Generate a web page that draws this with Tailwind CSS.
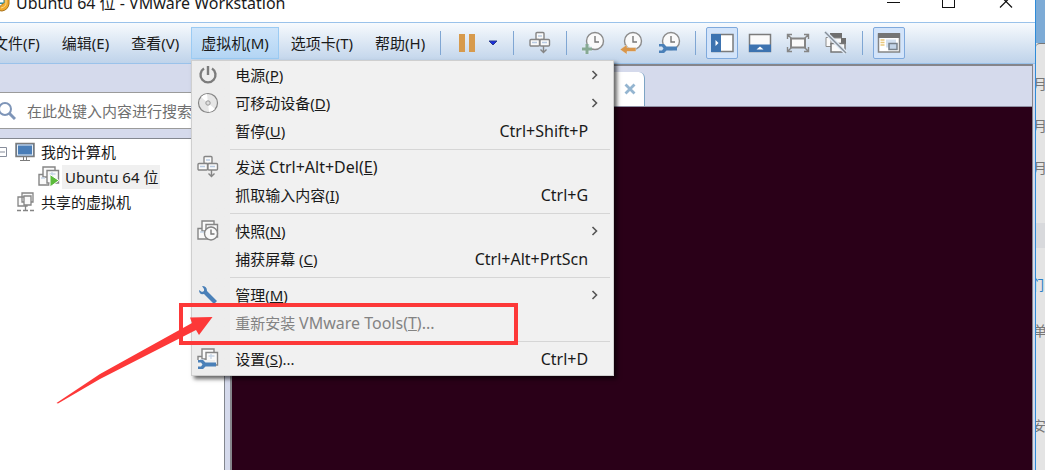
<!DOCTYPE html>
<html lang="zh-CN">

<head>
	<meta charset="UTF-8" />
	<meta name="viewport" content="width=device-width, initial-scale=1.0" />
	<title>Ubuntu 64 位 - VMware Workstation</title>
	<script src="https://cdn.jsdelivr.net/npm/@tailwindcss/browser@4"></script>
</head>

<body class="flex h-screen overflow-hidden bg-white text-[15px] leading-6 text-[#1a1a1a] font-['Noto_Sans','Noto_Sans_CJK_SC',sans-serif]">
	<!-- shared symbols -->
	<svg class="hidden">
		<symbol id="clock" viewBox="0 0 24 24">
			<circle cx="14" cy="10" r="8.500" fill="#fafafa" stroke="#8b8b8b" stroke-width="1.400" />
			<path d="M14 5v6h4" fill="none" stroke="#777" stroke-width="1.400" />
		</symbol>
		<symbol id="keys" viewBox="0 0 24 24">
			<g fill="#fafafa" stroke="#858585" stroke-width="1.400">
				<rect x="8" y="1.500" width="8" height="7" rx="1" />
				<rect x="2" y="8.500" width="9.500" height="6.500" rx="1" />
				<rect x="12" y="8.500" width="9.500" height="6.500" rx="1" />
				<path d="M15.500 15v6M12.500 18.500l3 3 3-3" fill="none" />
			</g>
			<path d="M10 5h4M4 11.500h5M14 11.500h5" stroke="#b9cbe2" stroke-width="1.500" />
		</symbol>
		<symbol id="wrench-flat" viewBox="0 0 24 24">
			<path d="M2 13h5l2.500 2.500H20v4H9.500L7 22H2v-2.500h3l1.500-2L5 15.500H2z" fill="#4a80b8" />
		</symbol>
		<symbol id="machines" viewBox="0 0 24 24">
			<g fill="#fafafa" stroke="#858585" stroke-width="1.400">
				<path d="M2 20V9.500h10V20z" />
				<path d="M6 12V2h12v10z" />
				<path d="M10 18V5.500h11.500V18z" />
			</g>
			<path d="M4 13h4M12.500 9h6M15 7v5" stroke="#c6d5e6" stroke-width="1.300" />
		</symbol>
		<symbol id="chevron" viewBox="0 0 8 12">
			<path d="M1.500 2l4 4-4 4" fill="none" stroke="#555" stroke-width="1.600" />
		</symbol>
	</svg>

	<div class="relative flex min-w-0 flex-1 flex-col border-r border-[#2f8bd8] bg-[#d5daec]">
		<header class="flex h-[22px] shrink-0 items-start bg-white">
			<svg class="-ml-2 -mt-2 mr-1 h-5 w-5 shrink-0" viewBox="0 0 20 20">
				<path d="M2 2h13v10H2z" fill="#2f9fba" />
				<path d="M5 15q5 0 6-5V2h6v10q-1 6-7 7-5 0-7-3z" fill="#f0a92d" stroke="#a9731c" />
				<path d="M7 3h5v8H7z" fill="#fff" stroke="#247f96" />
				<path d="M14 2v9q0 4-5 5" fill="none" stroke="#f9d98e" />
			</svg>
			<h1 class="-mt-[9px] whitespace-nowrap text-base">Ubuntu 64 位 - VMware Workstation</h1>
			<div class="-mt-2 ml-auto flex h-6 items-center">
				<button aria-label="最小化" class="flex w-14 justify-center">
					<svg class="h-5 w-5" viewBox="0 0 20 20"><path d="M2 8.500h13" stroke="#111" /></svg>
				</button>
				<button aria-label="最大化" class="flex w-14 justify-center">
					<svg class="h-5 w-5" viewBox="0 0 20 20"><rect x="1.500" y="2.500" width="12" height="11" fill="none" stroke="#111" /></svg>
				</button>
				<button aria-label="关闭" class="flex w-14 justify-center">
					<svg class="h-5 w-5" viewBox="0 0 20 20"><path d="M3 1.500l12 12M15 1.500l-12 12" stroke="#111" stroke-width="1.200" /></svg>
				</button>
			</div>
		</header>

		<div class="flex h-[42px] shrink-0 items-center border-t border-b border-[#9ac2ea] bg-linear-to-b from-[#f7fafd] to-[#bfd3ea]">
			<nav class="-ml-[17px] flex gap-[2px] whitespace-nowrap">
				<button class="h-8 px-[10px]">文件(F)</button>
				<button class="h-8 px-[10px]">编辑(E)</button>
				<button class="h-8 px-[10px]">查看(V)</button>
				<div class="relative">
					<button aria-expanded="true" class="h-8 border border-[#9bcbf3] bg-linear-to-b from-[#cfe5fa] to-[#b3d5f4] px-[9px]">虚拟机(M)</button>
					<ul class="absolute top-full left-0 z-10 mt-px w-[423px] border border-[#cfcfcf] bg-[#f1f1f1] bg-linear-to-r from-[#ededed] from-[38px] to-[#f1f1f1] to-[38px] pb-[2px] shadow-[3px_3px_4px_rgba(0,0,0,0.6)]">
						<li><button class="flex h-7 w-full items-center pr-[14px]">
							<span class="flex w-[43px] shrink-0 pl-1">
								<svg class="h-6 w-6" viewBox="0 0 24 24"><path d="M8 5.500a7.500 7.500 0 1 0 8 0M12 3v9" fill="none" stroke="#7c7c7c" stroke-width="2.400" /></svg>
							</span>
							<span>电源(<u>P</u>)</span>
							<svg class="ml-auto h-3 w-2"><use href="#chevron" /></svg>
						</button></li>
						<li><button class="flex h-7 w-full items-center pr-[14px]">
							<span class="flex w-[43px] shrink-0 pl-1">
								<svg class="h-6 w-6" viewBox="0 0 24 24">
									<circle cx="12" cy="12" r="9.500" fill="#e6e6e6" stroke="#858585" stroke-width="1.200" />
									<path d="M12 12L5 6a9 9 0 0 1 6-3zM12 12l7 6a9 9 0 0 1-6 3z" fill="#fff" />
									<circle cx="12" cy="12" r="2.200" fill="#ddd" stroke="#999" />
								</svg>
							</span>
							<span>可移动设备(<u>D</u>)</span>
							<svg class="ml-auto h-3 w-2"><use href="#chevron" /></svg>
						</button></li>
						<li><button class="flex h-7 w-full items-center pr-[25px] pl-[43px]">
							<span>暂停(<u>U</u>)</span>
							<span class="ml-auto text-base">Ctrl+Shift+P</span>
						</button></li>
						<li class="mt-1 mb-[3px] ml-[38px] mr-[3px] h-px bg-[#d6d6d6]"></li>
						<li><button class="flex h-7 w-full items-center pr-[14px]">
							<span class="flex w-[43px] shrink-0 pl-1"><svg class="h-6 w-6"><use href="#keys" /></svg></span>
							<span>发送 <span class="text-base">Ctrl+Alt+Del(<u>E</u>)</span></span>
						</button></li>
						<li><button class="flex h-7 w-full items-center pr-[25px] pl-[43px]">
							<span>抓取输入内容(<u>I</u>)</span>
							<span class="ml-auto text-base">Ctrl+G</span>
						</button></li>
						<li class="mt-1 mb-[3px] ml-[38px] mr-[3px] h-px bg-[#d6d6d6]"></li>
						<li><button class="flex h-7 w-full items-center pr-[14px]">
							<span class="flex w-[43px] shrink-0 pl-1">
								<svg class="h-6 w-6" viewBox="0 0 24 24">
									<use href="#machines" width="24" height="24" />
									<circle cx="15" cy="14.500" r="6.500" fill="#fafafa" stroke="#858585" stroke-width="1.400" />
									<path d="M15 10.500v4.500h3.500" fill="none" stroke="#777" stroke-width="1.400" />
								</svg>
							</span>
							<span>快照(<u>N</u>)</span>
							<svg class="ml-auto h-3 w-2"><use href="#chevron" /></svg>
						</button></li>
						<li><button class="flex h-7 w-full items-center pr-[25px] pl-[43px]">
							<span>捕获屏幕 (<u>C</u>)</span>
							<span class="ml-auto text-base">Ctrl+Alt+PrtScn</span>
						</button></li>
						<li class="mt-1 mb-[3px] ml-[38px] mr-[3px] h-px bg-[#d6d6d6]"></li>
						<li><button class="flex h-7 w-full items-center pr-[14px]">
							<span class="flex w-[43px] shrink-0 pl-1">
								<svg class="h-6 w-6" viewBox="0 0 24 24">
									<path d="M6 3q5 0 5 5l10 10-3 3L8 11q-5 1-5-4l3 2 2-1V6z" fill="#4a80b8" />
								</svg>
							</span>
							<span>管理(<u>M</u>)</span>
							<svg class="ml-auto h-3 w-2"><use href="#chevron" /></svg>
						</button></li>
						<li><button disabled class="flex h-7 w-full items-center pr-[25px] pl-[43px] text-[#838383]">
							<span>重新安装 <span class="text-base">VMware Tools(<u>T</u>)...</span></span>
						</button></li>
						<li class="mt-1 mb-[3px] ml-[38px] mr-[3px] h-px bg-[#d6d6d6]"></li>
						<li><button class="flex h-7 w-full items-center pr-[25px]">
							<span class="flex w-[43px] shrink-0 pl-1">
								<svg class="h-6 w-6" viewBox="0 0 24 24">
									<use href="#machines" width="24" height="24" />
									<path d="M1 13h18v9H1z" fill="#efefef" />
									<use href="#wrench-flat" width="24" height="24" />
								</svg>
							</span>
							<span>设置(<u>S</u>)...</span>
							<span class="ml-auto text-base">Ctrl+D</span>
						</button></li>
					</ul>
				</div>
				<button class="h-8 px-[10px]">选项卡(T)</button>
				<button class="h-8 px-[10px]">帮助(H)</button>
			</nav>

			<div class="ml-[5px] flex items-center gap-[10px]">
				<span class="h-6 w-px bg-[#7fa6d3]"></span>
				<div class="flex">
					<button aria-label="挂起" class="flex h-8 w-8 items-center justify-center gap-1">
						<span class="h-[18px] w-[6px] bg-[#d79a4c]"></span>
						<span class="h-[18px] w-[6px] bg-[#d79a4c]"></span>
					</button>
					<button aria-label="电源选项" class="flex h-8 w-5 items-center justify-center">
						<svg class="h-[6px] w-[10px]" viewBox="0 0 10 6"><path d="M1 1h8L5 5z" fill="#1a2fe0" stroke="#2b3c8c" /></svg>
					</button>
				</div>
				<span class="h-6 w-px bg-[#7fa6d3]"></span>
				<button aria-label="发送 Ctrl+Alt+Del" class="flex h-8 w-8 items-center justify-center">
					<svg class="h-6 w-6"><use href="#keys" /></svg>
				</button>
				<span class="h-6 w-px bg-[#7fa6d3]"></span>
				<div class="flex gap-[6px]">
					<button aria-label="拍摄快照" class="flex h-8 w-8 items-center justify-center">
						<svg class="h-6 w-6" viewBox="0 0 24 24">
							<use href="#clock" width="24" height="24" />
							<path d="M6 13v10M1 18h10" stroke="#dfe9f4" stroke-width="5" />
							<path d="M6 13v10M1 18h10" stroke="#86a993" stroke-width="3" />
						</svg>
					</button>
					<button aria-label="恢复快照" class="flex h-8 w-8 items-center justify-center">
						<svg class="h-6 w-6" viewBox="0 0 24 24">
							<use href="#clock" width="24" height="24" />
							<path d="M1 18.500l7-5v3h9v4H8v3z" fill="#d9964a" stroke="#dfe9f4" stroke-width=".5" />
						</svg>
					</button>
					<button aria-label="管理快照" class="flex h-8 w-8 items-center justify-center">
						<svg class="h-6 w-6" viewBox="0 0 24 24">
							<use href="#clock" width="24" height="24" />
							<use href="#wrench-flat" width="24" height="24" />
						</svg>
					</button>
				</div>
				<span class="h-6 w-px bg-[#7fa6d3]"></span>
				<div class="flex gap-[6px]">
					<button aria-label="显示库" aria-pressed="true" class="flex h-8 w-8 items-center justify-center rounded-xs border border-[#7fa9dc] bg-[#d3e4fa]">
						<svg class="h-6 w-6 shrink-0" viewBox="0 0 24 24">
							<rect x="2" y="3.500" width="21" height="17" fill="#fff" stroke="#7b7b7b" stroke-width="1.500" />
							<path d="M1 3h10v18H1z" fill="#3d73b0" />
							<path d="M5.500 9l3 3-3 3z" fill="#fff" />
						</svg>
					</button>
					<button aria-label="显示缩略图" class="flex h-8 w-8 items-center justify-center">
						<svg class="h-6 w-6" viewBox="0 0 24 24">
							<rect x="1.500" y="3.500" width="21" height="17" fill="#fafafa" stroke="#7b7b7b" stroke-width="1.500" />
							<path d="M1 13.500h22V21H1z" fill="#3d73b0" />
							<path d="M8.500 18.500h7L12 15.500z" fill="#fff" />
						</svg>
					</button>
					<button aria-label="全屏" class="flex h-8 w-8 items-center justify-center">
						<svg class="h-6 w-6" viewBox="0 0 24 24" fill="none" stroke="#858585" stroke-width="1.400">
							<rect x="5" y="7.500" width="14" height="9" fill="#fafafa" stroke-width="2" />
							<path d="M1.500 8V3.500H6M18 3.500h4.500V8M22.500 16v4.500H18M6 20.500H1.500V16M1.500 3.500l4 4M22.500 3.500l-4 4M22.500 20.500l-4-4M1.500 20.500l4-4" />
						</svg>
					</button>
					<button aria-label="Unity 模式" class="flex h-8 w-8 items-center justify-center">
						<svg class="h-6 w-6" viewBox="0 0 24 24">
							<path d="M2 6.500h7v9H2z" fill="#fafafa" stroke="#8b8b8b" />
							<path d="M6 2h12v5H6z" fill="#6f6f6f" />
							<path d="M7 7h10.500v7H7z" fill="#fafafa" stroke="#8b8b8b" />
							<path d="M17 7h5v6h-5z" fill="#6f6f6f" />
							<path d="M7 12.500h14v8.500H7z" fill="#fafafa" stroke="#777" stroke-width="1.500" />
							<path d="M1 1l21 21" stroke="#dfe9f4" stroke-width="4" />
							<path d="M1 1l21 21" stroke="#858e97" stroke-width="1.500" />
						</svg>
					</button>
				</div>
				<span class="h-6 w-px bg-[#7fa6d3]"></span>
				<button aria-label="控制台视图" aria-pressed="true" class="flex h-8 w-8 items-center justify-center rounded-xs border border-[#7fa9dc] bg-[#d3e4fa]">
					<svg class="h-6 w-6 shrink-0" viewBox="0 0 24 24">
						<rect x="1.500" y="3" width="21" height="18" fill="#fff" stroke="#858585" stroke-width="1.500" />
						<path d="M1 2h22v5H1z" fill="#757575" />
						<path d="M3.500 9h4M3.500 11.500h4M3.500 14h4" stroke="#e9c77c" stroke-width="1.500" />
						<path d="M9 8.500h10v8H9z" fill="#d3e0f0" />
						<rect x="12" y="12.500" width="8" height="6" fill="#c3d4e8" stroke="#77808a" stroke-width="1.500" />
					</svg>
				</button>
			</div>
		</div>

		<div class="flex min-h-0 flex-1">
			<aside class="flex w-[225px] shrink-0 flex-col border-r border-[#83878f]">
				<div class="h-7 shrink-0"></div>
				<label class="flex h-[37px] shrink-0 items-center border-y border-[#9b9b9b] bg-white">
					<svg class="-ml-1 h-5 w-5 shrink-0" viewBox="0 0 20 20" fill="none" stroke="#7e95b8">
						<circle cx="9" cy="8" r="6" stroke-width="2" />
						<path d="M13 12l6 6" stroke-width="3" />
					</svg>
					<input type="text" aria-label="搜索" placeholder="在此处键入内容进行搜索" class="ml-[11px] w-full min-w-0 bg-transparent outline-none placeholder:text-[#6f6f6f]" />
				</label>
				<div class="h-[9px] shrink-0"></div>
				<ul class="flex-1 border-t border-[#83878f] bg-white">
					<li class="flex h-[25px] items-center">
						<svg class="h-5 w-[41px] shrink-0" viewBox="0 0 41 20">
							<path d="M-2 5.500h8.500v9H-2M0 10h5" fill="none" stroke="#878d9b" />
							<rect x="16" y="1.500" width="18" height="13" fill="#4a7eb8" stroke="#7b7b7b" stroke-width="1.500" />
							<rect x="17.500" y="3" width="15" height="10" fill="none" stroke="#e8eef5" />
							<path d="M23.500 15v3.500M26.500 15v3.500M20 18.500h10" stroke="#7b7b7b" />
						</svg>
						<span>我的计算机</span>
					</li>
					<li class="flex h-[25px] items-center">
						<svg class="ml-[37px] mr-px h-6 w-6 shrink-0" viewBox="0 0 24 24">
							<use href="#machines" width="24" height="24" />
							<path d="M13 9.500l9 6-9 6.500z" fill="#5cbb3b" stroke="#fff" />
						</svg>
						<span class="bg-[#f0f0f0] pr-[2px] pl-[3px]">Ubuntu 64 位</span>
					</li>
					<li class="flex h-[25px] items-center">
						<svg class="ml-[14px] mr-[3px] h-6 w-6 shrink-0" viewBox="0 0 24 24">
							<g fill="#fafafa" stroke="#858585" stroke-width="1.300">
								<path d="M8 3h11v9H8zM4 7h9v9H4z" />
								<path d="M10 6h7v9h-7z" />
								<path d="M11.500 16v4M3 20.500h4M9 20.500h5M16 20.500h4" />
							</g>
						</svg>
						<span>共享的虚拟机</span>
					</li>
				</ul>
			</aside>

			<main class="ml-[5px] mr-[2px] flex min-w-0 flex-1 flex-col border-x border-t-2 border-l-2 border-[#85858b]">
				<div class="flex h-[41px] shrink-0 items-end border-b border-[#8f90a4]">
					<div class="flex h-[34px] w-[413px] items-center justify-end rounded-tr-md border-r border-[#7da4c4] bg-white pr-2">
						<button aria-label="关闭选项卡">
							<svg class="h-3 w-3" viewBox="0 0 12 12"><path d="M1.500 1.500l9 9M10.500 1.500l-9 9" stroke="#94b5d0" stroke-width="2.800" /></svg>
						</button>
					</div>
				</div>
				<div class="flex-1 bg-[#2a0018]"></div>
			</main>
		</div>

		<!-- red callout over the disabled entry -->
		<div class="pointer-events-none absolute top-[303px] left-[179px] z-20 h-[42px] w-[339px] border-4 border-[#fd3838]"></div>
		<svg class="pointer-events-none absolute top-[310px] left-[50px] z-20 h-[100px] w-[170px]" viewBox="50 310 170 100">
			<path d="M56.500 403L100 374 192 323l-2-5.500 22.500-.5L199 335l-3-5-96 49-42 24.500z" fill="#fd3838" />
		</svg>
	</div>

	<!-- sliver of the window behind -->
	<div class="flex w-[9px] shrink-0 flex-col overflow-hidden bg-[#e4e4e4] text-[14px] text-[#777]">
		<div class="h-[43px] shrink-0 bg-[#7dabd6]"></div>
		<div class="h-[29px] shrink-0 rounded-tl border-t border-[#777]"></div>
		<div class="-ml-[3px] h-[42px] shrink-0">月</div>
		<div class="-ml-[3px] h-[42px] shrink-0">月</div>
		<div class="-ml-[3px] h-[42px] shrink-0">月</div>
		<div class="mt-[25px] h-[25px] shrink-0 bg-[#d8d9dc]"></div>
		<div class="-ml-[6px] mt-[25px] h-[46px] shrink-0 text-[#2a7fc6]">们</div>
		<div class="-ml-[3px] h-[95px] shrink-0">单</div>
		<div class="-ml-[4px] shrink-0">安</div>
	</div>
	<div class="w-[10px] shrink-0 bg-white"></div>
</body>

</html>
